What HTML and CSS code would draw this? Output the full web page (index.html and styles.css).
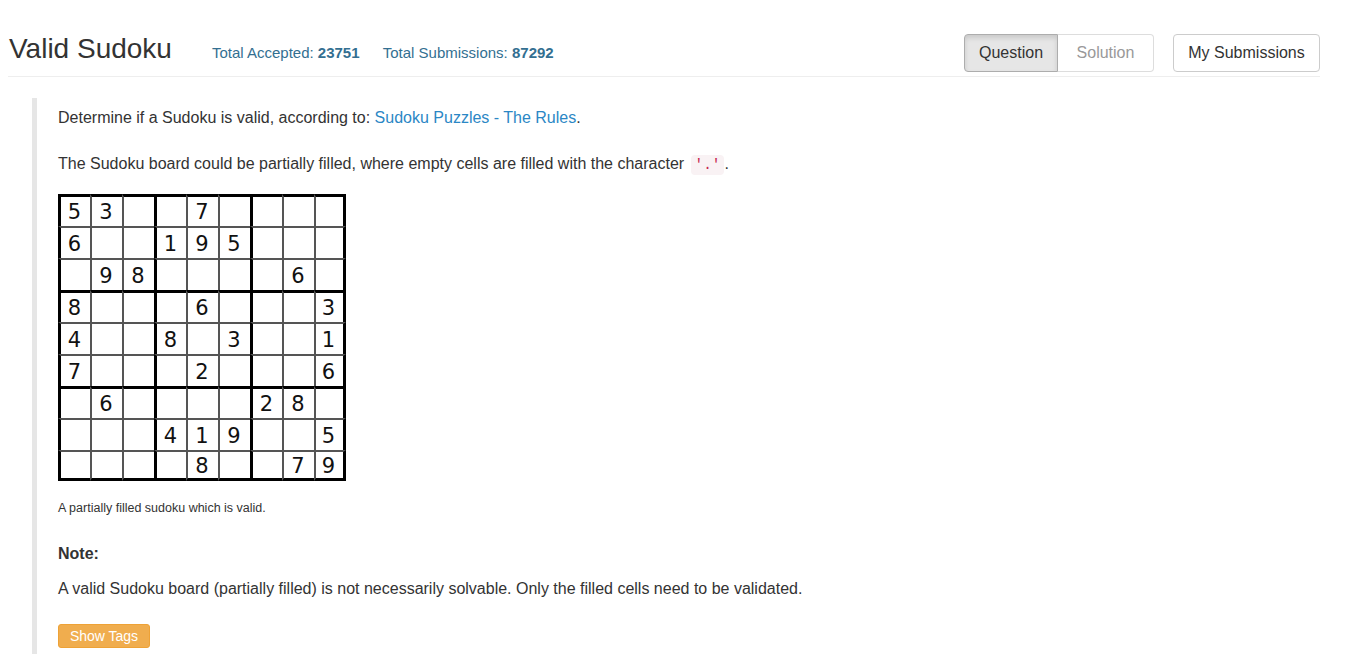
FILE: index.html
```html
<!DOCTYPE html>
<html lang="en">
<head>
<meta charset="utf-8">
<title>Valid Sudoku</title>
<link rel="stylesheet" href="styles.css">
</head>
<body>
<div class="page">
  <header class="header">
    <div class="title-group">
      <h3 class="title">Valid Sudoku</h3>
      <div class="stats">
        <span class="stat">Total Accepted: <b>23751</b></span>
        <span class="stat">Total Submissions: <b>87292</b></span>
      </div>
    </div>
    <div class="actions">
      <div class="btn-group">
        <button class="btn btn-active">Question</button>
        <button class="btn btn-muted">Solution</button>
      </div>
      <button class="btn btn-plain">My Submissions</button>
    </div>
  </header>

  <blockquote class="question">
    <p class="p-first">Determine if a Sudoku is valid, according to: <a class="link" href="#">Sudoku Puzzles - The Rules</a>.</p>
    <p class="p-second">The Sudoku board could be partially filled, where empty cells are filled with the character <code class="code">'.'</code>.</p>

    <div class="board">
      <div class="row"><span class="cell">5</span><span class="cell">3</span><span class="cell"></span><span class="cell"></span><span class="cell">7</span><span class="cell"></span><span class="cell"></span><span class="cell"></span><span class="cell"></span></div>
      <div class="row"><span class="cell">6</span><span class="cell"></span><span class="cell"></span><span class="cell">1</span><span class="cell">9</span><span class="cell">5</span><span class="cell"></span><span class="cell"></span><span class="cell"></span></div>
      <div class="row"><span class="cell"></span><span class="cell">9</span><span class="cell">8</span><span class="cell"></span><span class="cell"></span><span class="cell"></span><span class="cell"></span><span class="cell">6</span><span class="cell"></span></div>
      <div class="row"><span class="cell">8</span><span class="cell"></span><span class="cell"></span><span class="cell"></span><span class="cell">6</span><span class="cell"></span><span class="cell"></span><span class="cell"></span><span class="cell">3</span></div>
      <div class="row"><span class="cell">4</span><span class="cell"></span><span class="cell"></span><span class="cell">8</span><span class="cell"></span><span class="cell">3</span><span class="cell"></span><span class="cell"></span><span class="cell">1</span></div>
      <div class="row"><span class="cell">7</span><span class="cell"></span><span class="cell"></span><span class="cell"></span><span class="cell">2</span><span class="cell"></span><span class="cell"></span><span class="cell"></span><span class="cell">6</span></div>
      <div class="row"><span class="cell"></span><span class="cell">6</span><span class="cell"></span><span class="cell"></span><span class="cell"></span><span class="cell"></span><span class="cell">2</span><span class="cell">8</span><span class="cell"></span></div>
      <div class="row"><span class="cell"></span><span class="cell"></span><span class="cell"></span><span class="cell">4</span><span class="cell">1</span><span class="cell">9</span><span class="cell"></span><span class="cell"></span><span class="cell">5</span></div>
      <div class="row"><span class="cell"></span><span class="cell"></span><span class="cell"></span><span class="cell"></span><span class="cell">8</span><span class="cell"></span><span class="cell"></span><span class="cell">7</span><span class="cell">9</span></div>
    </div>

    <p class="caption">A partially filled sudoku which is valid.</p>
    <p class="note">Note:</p>
    <p class="p-third">A valid Sudoku board (partially filled) is not necessarily solvable. Only the filled cells need to be validated.</p>
    <button class="tags-btn">Show Tags</button>
  </blockquote>
</div>
</body>
</html>
```

FILE: styles.css
```css
body {
  margin: 8px;
  font-family: "Liberation Sans", Arial, sans-serif;
  font-size: 16px;
  color: #333;
  background: #fff;
}

.page {
  width: 1312px;
}

.header {
  display: flex;
  justify-content: space-between;
  align-items: flex-start;
  padding-top: 26px;
  padding-bottom: 4px;
  border-bottom: 1px solid #eee;
}

.title-group {
  display: flex;
  align-items: baseline;
}

.title {
  margin: 0 0 0 1px;
  font-size: 28px;
  font-weight: normal;
  line-height: 29px;
  color: #333;
}

.stats {
  margin-left: 40px;
  font-size: 15px;
  color: #336f91;
}

.stat + .stat {
  margin-left: 19px;
}

.actions {
  display: flex;
  align-items: flex-start;
  gap: 19px;
}

.btn-group {
  display: flex;
}

.btn {
  box-sizing: border-box;
  height: 38px;
  padding: 0 14px;
  display: flex;
  align-items: center;
  justify-content: center;
  white-space: nowrap;
  font-family: "Liberation Sans", Arial, sans-serif;
  font-size: 16px;
  color: #333;
  background: #fff;
  border: 1px solid #ccc;
  border-radius: 4px;
  cursor: pointer;
}

.btn-active {
  width: 94px;
  border-radius: 4px 0 0 4px;
  background: #e6e6e6;
  border-color: #adadad;
  box-shadow: inset 0 3px 5px rgba(0, 0, 0, 0.125);
}

.btn-muted {
  width: 96px;
  border-radius: 0 4px 4px 0;
  border-left: none;
  border-color: #ddd;
  color: #999;
}

.btn-plain {
  width: 147px;
  border-color: #ccc;
}

.question {
  margin: 21px 0 0 24px;
  padding: 9px 0 6px 21px;
  border-left: 5px solid #e6e6e6;
}

.question p {
  margin: 0;
  line-height: 22px;
}

.p-first {
  margin-bottom: 24px !important;
}

.p-second {
  margin-bottom: 18px !important;
}

.link {
  color: #2b87c5;
  text-decoration: none;
}

.code {
  font-family: "Liberation Mono", "DejaVu Sans Mono", monospace;
  font-size: 90%;
  padding: 2px 4px;
  margin-left: 2px;
  color: #c7254e;
  background: #f9f2f4;
  border-radius: 4px;
}

.board {
  width: 288px;
  display: flex;
  flex-direction: column;
}

.row {
  display: flex;
}

.cell {
  box-sizing: border-box;
  width: 32px;
  height: 32px;
  display: flex;
  align-items: center;
  justify-content: center;
  padding-top: 1px;
  padding-right: 2px;
  border-left: 2px solid #555;
  border-top: 2px solid #555;
  font-family: "DejaVu Sans", sans-serif;
  font-size: 21px;
  color: #111;
}

.cell:nth-child(3n+1) {
  border-left: 3px solid #000;
}

.cell:last-child {
  border-right: 3px solid #000;
}

.row:nth-child(3n+1) .cell {
  border-top: 3px solid #000;
}

.row:last-child .cell {
  border-bottom: 3px solid #000;
  height: 31px;
}

.caption {
  margin-top: 19px !important;
  font-size: 12.5px;
  line-height: 17px !important;
}

.note {
  margin-top: 26px !important;
  font-weight: bold;
}

.p-third {
  margin-top: 13px !important;
}

.tags-btn {
  box-sizing: border-box;
  margin-top: 24px;
  width: 92px;
  height: 24px;
  padding: 0;
  font-family: "Liberation Sans", Arial, sans-serif;
  font-size: 14px;
  color: #fff;
  background: #f0ad4e;
  border: 1px solid #eea236;
  border-radius: 3px;
  display: block;
}
```
